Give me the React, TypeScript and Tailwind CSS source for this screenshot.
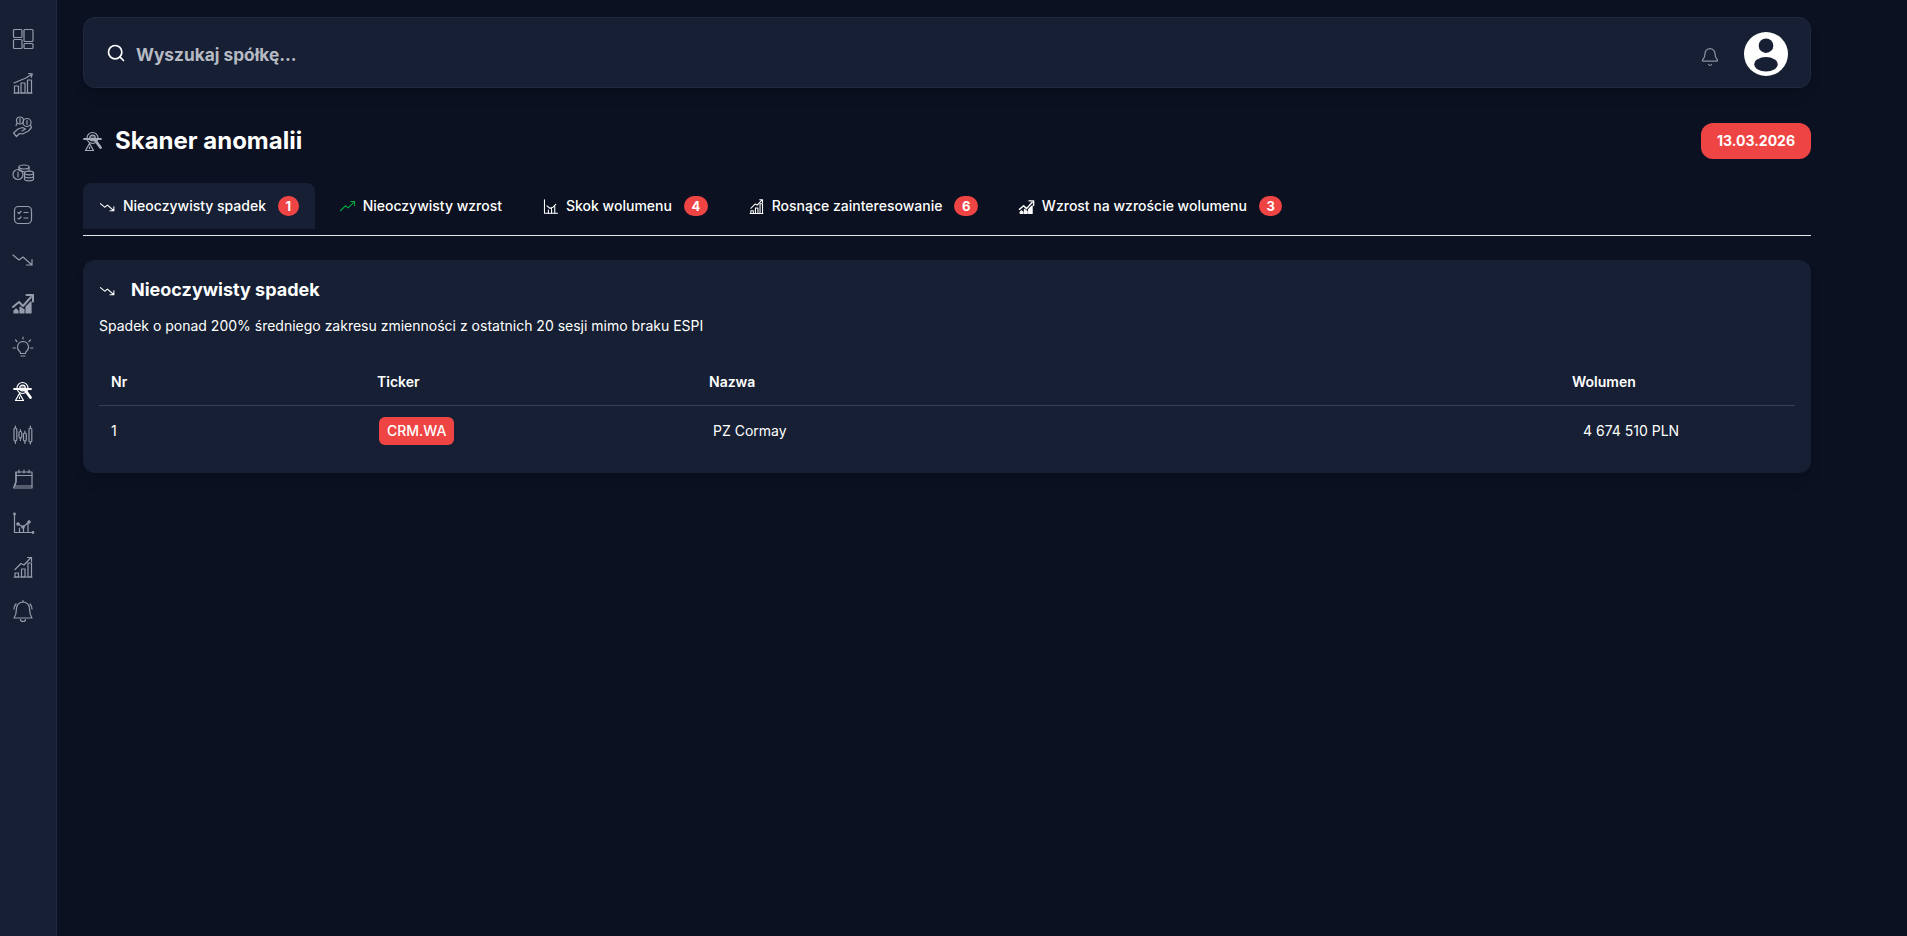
import type { FC, ReactNode } from "react";
import { Search, Bell } from "lucide-react";

const Ico: FC<{ size?: number; width?: number; className?: string; children: ReactNode }> = ({ size = 24, width = 1.2, className, children }) => (
    <svg width={size} height={size} viewBox="0 0 24 24" fill="none" stroke="currentColor" strokeWidth={width} strokeLinecap="round" strokeLinejoin="round" className={className}>
        {children}
    </svg>
);

const DashboardIcon = () => (
    <>
        <rect x="2.500" y="2.500" width="8.500" height="8" rx="1" />
        <rect x="2.500" y="12.500" width="8.500" height="9" rx="1" />
        <rect x="13" y="2.500" width="9" height="12" rx="1" />
        <rect x="13" y="16.500" width="9" height="5" rx="1" />
    </>
);

const GrowthIcon = () => (
    <>
        <path d="M3 22h18" />
        <rect x="3.500" y="15" width="4" height="7" />
        <rect x="10" y="12" width="4" height="10" />
        <rect x="16.500" y="9" width="4" height="13" />
        <path d="M3 12l7-3 5-2 6-4M17.500 2.500l3.800.3-1 3.600" />
    </>
);

const HandCoinsIcon = () => (
    <>
        <circle cx="9" cy="5.500" r="3.500" />
        <circle cx="16" cy="7.500" r="4" />
        <path d="M9 3.500v4M16 5.500v4M6 8.500l-1 2M19.500 10l1 2.500-3 3.500-6 3-3-.5-3 3-3-3.500 4.500-4 4.500-1.500 3 1.500-3.500 2" />
    </>
);

const CoinsIcon = () => (
    <>
        <circle cx="7" cy="15.500" r="5" />
        <path d="M7 13v5" />
        <ellipse cx="13" cy="8" rx="5" ry="2" />
        <path d="M8 8v3.500M18 8v3.500M8 11c1 1 3 1.500 5 1.500" />
        <ellipse cx="18" cy="14" rx="4.500" ry="1.800" />
        <path d="M13.500 14v6c0 1 2 1.800 4.500 1.800s4.500-.8 4.500-1.800v-6M13.500 17c0 1 2 1.800 4.500 1.800s4.500-.8 4.500-1.800" />
    </>
);

const ChecklistIcon = () => (
    <>
        <rect x="3.500" y="3.500" width="17" height="17" rx="4" />
        <path d="M7 9.500l1 1 2-2M13 9.500h4M7 15.500l1 .5 2-2M13 15h4" />
    </>
);

const TrendDownIcon = () => <path d="M2 8l6 5 4-3 9 8M21 12.500V18h-5.500" />;

const TrendUpBoldIcon = () => (
    <>
        <path d="M2 16l6-5 4 4 8-9" strokeWidth={2} />
        <path d="M15.500 4H22v6.500" strokeWidth={2} />
        <path d="M3 22v-2l2-2 2 2v2zM9 22v-6l2 1.500 2 1V22zM15 22v-6l2-2 3-3v11z" fill="currentColor" />
    </>
);

const BulbIcon = () => (
    <>
        <path d="M12 6.500a5.500 5.500 0 0 0-3.500 9.700c.7.700 1 1.300 1 2.300h5c0-1 .3-1.600 1-2.300A5.500 5.500 0 0 0 12 6.500z" />
        <path d="M10 21h4M12 2v2M4.500 5l1.500 1.500M19.500 5 18 6.500M2 13h2.500M19.500 13H22" />
    </>
);

const ScannerIcon = () => (
    <>
        <circle cx="11.500" cy="9" r="5.500" />
        <circle cx="11.500" cy="9" r="2.800" fill="currentColor" fillOpacity={0.4} />
        <path d="M3 10h17" strokeWidth={1.800} />
        <path d="M14 11l5.500 7.500" strokeWidth={2.800} />
        <path d="M8.500 14.500l-4 7h8z" />
        <path d="M8.500 18v1.500" />
    </>
);

const CandlesIcon = () => (
    <>
        <rect x="3" y="5" width="2.800" height="13" rx="1.300" />
        <path d="M4.400 3V5M4.400 18v2.500" />
        <rect x="8" y="8.500" width="2.800" height="6.500" rx="1.300" />
        <path d="M9.400 6.500v2M9.400 15v2.500" />
        <rect x="12.500" y="10" width="2.800" height="8" rx="1.300" />
        <path d="M13.900 8v2M13.900 18v2.500" />
        <rect x="18" y="5" width="2.800" height="14" rx="1.300" />
        <path d="M19.400 3v2M19.400 19v2" />
    </>
);

const CalendarIcon = () => (
    <>
        <path d="M5 5h16v16H2.500L5 14.500z" />
        <path d="M5 14.500V5M5 8.500h16M5 15l-1 4h17M8 3v3M13 3v3M18 3v3" />
    </>
);

const ChartDotsIcon = () => (
    <>
        <path d="M3.500 3v18.500H22" />
        <circle cx="3.500" cy="3" r=".8" />
        <circle cx="22" cy="21.500" r=".8" />
        <path d="M7 13l5 3 6-5M8.500 17v4.500M12.500 17v4.500M17 13v8.500" />
        <circle cx="7" cy="13" r="1.200" fill="currentColor" />
        <circle cx="12" cy="16" r="1.200" fill="currentColor" />
        <circle cx="18" cy="11" r="1.200" fill="currentColor" />
    </>
);

const GrowthThinIcon = () => (
    <>
        <path d="M3 22h18" />
        <rect x="4" y="18" width="3.500" height="4" />
        <rect x="10.500" y="14" width="3.500" height="8" />
        <rect x="17" y="8" width="3.500" height="14" />
        <path d="M4 14.500l6-6 3 1.500 7-7.500M16.500 2.500h4v4" />
    </>
);

const AlarmIcon = () => (
    <>
        <path d="M12 3a6.500 6.500 0 0 0-6.500 6.500c0 5-1.500 8-2.500 9.500h18c-1-1.500-2.500-4.500-2.500-9.500A6.500 6.500 0 0 0 12 3z" />
        <path d="M9.500 20.500a2.500 2 0 0 0 5 0M12 1.500V3M3 10c0-2 .7-3.500 2-5M21 10c0-2-.7-3.500-2-5" />
    </>
);

const TrendUpIcon = () => <path d="M2 18l7-7 4 3 9-9M16.500 5H22v5.500" />;

const VolumeChartIcon = () => (
    <>
        <path d="M3.500 2.500v19H22" />
        <path d="M7 11l4 3.500 4.500-1.500 4-4M9 17v4.500M13.500 15v6.500M18 12v9.500" />
    </>
);

const sideIcons: { icon: ReactNode; active?: boolean }[] = [
    { icon: <DashboardIcon /> },
    { icon: <GrowthIcon /> },
    { icon: <HandCoinsIcon /> },
    { icon: <CoinsIcon /> },
    { icon: <ChecklistIcon /> },
    { icon: <TrendDownIcon /> },
    { icon: <TrendUpBoldIcon /> },
    { icon: <BulbIcon /> },
    { icon: <ScannerIcon />, active: true },
    { icon: <CandlesIcon /> },
    { icon: <CalendarIcon /> },
    { icon: <ChartDotsIcon /> },
    { icon: <GrowthThinIcon /> },
    { icon: <AlarmIcon /> },
];

const tabs: { label: string; icon: ReactNode; count?: number; active?: boolean; iconClass?: string }[] = [
    { label: "Nieoczywisty spadek", icon: <TrendDownIcon />, count: 1, active: true },
    { label: "Nieoczywisty wzrost", icon: <TrendUpIcon />, iconClass: "text-green-600" },
    { label: "Skok wolumenu", icon: <VolumeChartIcon />, count: 4 },
    { label: "Rosnące zainteresowanie", icon: <GrowthThinIcon />, count: 6 },
    { label: "Wzrost na wzroście wolumenu", icon: <TrendUpBoldIcon />, count: 3 },
];

export default function App() {
    return (
        <div className="flex min-h-[936px] bg-[#0b1120] text-white font-['Inter',sans-serif]">
            <aside className="w-[57px] shrink-0 bg-[#161f33] border-r border-[#1f2a40] pt-[27px] flex flex-col items-center pr-[11px]">
                {sideIcons.map((item, i) => (
                    <div key={i} className={`h-[44px] flex items-start ${item.active ? "text-white" : "text-[#959cab]"}`}>
                        <Ico size={24}>{item.icon}</Ico>
                    </div>
                ))}
            </aside>

            <main className="w-[1728px] ml-[26px] pt-[17px]">
                {/* Search */}
                <div className="h-[71px] flex items-center rounded-xl bg-[#161f33] border border-[#1f2a40] shadow-lg pl-[22px] pr-[22px] pt-[3px]">
                    <Search size={20} className="text-white -mt-[2px]" strokeWidth={2} />
                    <span className="ml-[10px] mt-[2px] text-[17.3px] font-bold text-[#b6bac3]">Wyszukaj spółkę...</span>
                    <Bell size={20} strokeWidth={1.5} className="ml-auto mr-[24px] mt-[6px] text-[#8a92a3]" />
                    <svg width="44" height="44" viewBox="0 0 44 44">
                        <circle cx="22" cy="22" r="22" fill="#fff" />
                        <circle cx="22" cy="13.700" r="7.300" fill="#161f33" />
                        <ellipse cx="22" cy="32.300" rx="11.700" ry="7.300" fill="#161f33" />
                    </svg>
                </div>

                {/* Header */}
                <div className="mt-[35px] h-[36px] flex items-center justify-between">
                    <div className="flex items-center">
                        <Ico size={24} className="-ml-[2px] text-[#a5abb7]"><ScannerIcon /></Ico>
                        <h1 className="ml-[10px] text-2xl font-bold">Skaner anomalii</h1>
                    </div>
                    <span className="h-[36px] w-[110px] flex items-center justify-center rounded-xl bg-[#ef4444] text-sm font-bold">13.03.2026</span>
                </div>

                {/* Tabs */}
                <div className="mt-[24px] h-[53px] flex gap-2 border-b border-[#e5e7eb] pb-[6px]">
                    {tabs.map((tab) => (
                        <div key={tab.label} className={`h-[46px] flex items-center px-4 rounded-t-lg text-sm font-medium ${tab.active ? "bg-[#161f33]" : ""}`}>
                            <Ico size={17} width={1.5} className={tab.iconClass ?? "text-white"}>{tab.icon}</Ico>
                            <span className="ml-[7px]">{tab.label}</span>
                            {tab.count !== undefined && (
                                <span className="ml-3 h-[20px] px-[7.5px] flex items-center justify-center rounded-full bg-[#ef4444] text-[13px] font-bold">{tab.count}</span>
                            )}
                        </div>
                    ))}
                </div>

                {/* Card */}
                <section className="mt-[24px] h-[213px] rounded-xl bg-[#161f33] shadow-lg p-4">
                    <div className="flex items-center h-[28px]">
                        <Ico size={17} width={1.5} className="text-white"><TrendDownIcon /></Ico>
                        <h2 className="ml-[15px] text-lg font-bold">Nieoczywisty spadek</h2>
                    </div>
                    <p className="mt-[12px] text-sm">Spadek o ponad 200% średniego zakresu zmienności z ostatnich 20 sesji mimo braku ESPI</p>
                    <table className="mt-[24px] w-full table-fixed text-sm border-collapse">
                        <thead>
                            <tr className="h-[45px] border-b border-[#334155]">
                                <th className="w-[266px] px-3 text-left font-semibold">Nr</th>
                                <th className="w-[332px] px-3 text-left font-semibold">Ticker</th>
                                <th className="w-[863px] px-3 text-left font-semibold">Nazwa</th>
                                <th className="px-3 text-left font-semibold">Wolumen</th>
                            </tr>
                        </thead>
                        <tbody>
                            <tr className="h-[52px]">
                                <td className="px-3">1</td>
                                <td className="px-3">
                                    <span className="ml-[2px] inline-block rounded-md bg-[#ef4444] px-2 py-1 font-medium">CRM.WA</span>
                                </td>
                                <td className="px-4">PZ Cormay</td>
                                <td className="px-[23px]">4 674 510 PLN</td>
                            </tr>
                        </tbody>
                    </table>
                </section>
            </main>
        </div>
    );
}
